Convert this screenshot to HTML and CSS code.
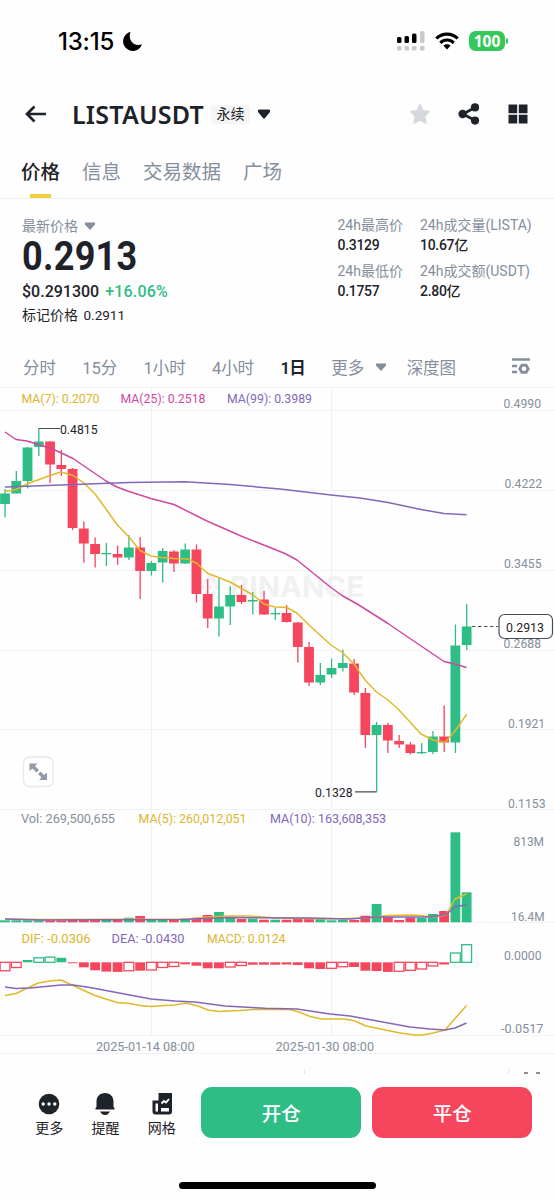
FILE: index.html
```html
<!DOCTYPE html>
<html lang="zh-CN">
<head>
    <meta charset="UTF-8">
    <meta name="viewport" content="width=device-width, initial-scale=1.0">
    <title>LISTAUSDT</title>
    <link rel="stylesheet" href="styles.css">
</head>
<body>
    <div class="status-bar">
        <span class="time">13:15</span>
        <svg class="moon" width="20" height="20" viewBox="0 0 20 20"><path d="M7.5 0.8A9.7 9.7 0 1 0 19 13.3C11 16.500 4.500 9 7.5 .8Z"/></svg>
        <svg class="signal" width="28" height="20" viewBox="0 0 28 20">
            <g fill="#c9c9cb"><rect x="23" y="0" width="4.5" height="12" rx="1.5"/><rect x="0" y="15" width="4.5" height="4.5" rx="1.3"/><rect x="7.5" y="15" width="4.5" height="4.5" rx="1.3"/><rect x="15" y="15" width="4.5" height="4.5" rx="1.3"/><rect x="23" y="15" width="4.5" height="4.5" rx="1.3"/></g>
            <rect x="0" y="6" width="4.5" height="6" rx="1.5"/><rect x="7.5" y="5" width="4.5" height="7" rx="1.5"/><rect x="15" y="2.5" width="4.5" height="9.5" rx="1.5"/>
        </svg>
        <svg class="wifi" width="24" height="18" viewBox="0 0 24 18"><g fill="none" stroke="#000" stroke-width="3.1"><path d="M1.3 6.5A15.2 15.2 0 0 1 22.7 6.5"/><path d="M5.3 10.8A9.5 9.5 0 0 1 18.7 10.8"/></g><path d="M8.4 13.8A5.2 5.2 0 0 1 15.6 13.8L12 17.6Z"/></svg>
        <span class="battery">100</span>
    </div>

    <div class="header">
        <svg class="back" width="22" height="18" viewBox="0 0 22 18"><path d="M21 9H2.5M9.5 1.5L2 9l7.5 7.5" fill="none" stroke="#1e2329" stroke-width="2.7"/></svg>
        <h1>LISTAUSDT</h1>
        <span class="tag">永续</span>
        <svg class="caret" width="12" height="10" viewBox="0 0 12 10"><path d="M0 1.2Q0 .5 1 .5H11Q12 .5 12 1.2V3L7 9Q6 10 5 9L0 3Z" fill="#1e2329"/></svg>
        <svg class="star" width="22" height="22" viewBox="0 0 22 22"><path d="M11 1l3 6.6 7 .8-5.1 5 1.3 7.1L11 17.2l-6.2 3.3 1.3-7.1L1 8.4l7-.8z" fill="#d5d9df" stroke="#d5d9df" stroke-width="1" stroke-linejoin="round"/></svg>
        <svg class="share" width="22" height="22" viewBox="0 0 22 22" fill="#1e2329"><path d="M17 4.5L5 11l12 6.5" fill="none" stroke="#1e2329" stroke-width="2.6"/><circle cx="4.6" cy="11" r="4.2"/><circle cx="17" cy="4.4" r="4.1"/><circle cx="17" cy="17.6" r="4.1"/></svg>
        <svg class="grid" width="20" height="20" viewBox="0 0 20 20" fill="#1e2329"><path d="M.5.5h8.7v8.7H.5zM10.8.5h8.7v8.7h-8.7zM.5 10.8h8.7v8.7H.5zM10.8 10.8h8.7v8.7h-8.7z"/></svg>
    </div>

    <div class="tabs">
        <span class="active">价格</span>
        <span>信息</span>
        <span>交易数据</span>
        <span>广场</span>
    </div>

    <div class="summary">
        <div class="price">
            <div class="label">最新价格 <svg width="10" height="8" viewBox="0 0 10 8"><path d="M0 .5H10V2.5L5 8L0 2.5Z" fill="#848e9c"/></svg></div>
            <div class="big"><span>0.2913</span></div>
            <div class="fiat"><span>$0.291300</span> <span class="up">+16.06%</span></div>
            <div class="mark">标记价格 <span>0.2911</span></div>
        </div>
        <div class="stats">
            <div class="stat"><p>24h最高价</p><b>0.3129</b></div>
            <div class="stat"><p>24h成交量(LISTA)</p><b>10.67亿</b></div>
            <div class="stat"><p>24h最低价</p><b>0.1757</b></div>
            <div class="stat"><p>24h成交额(USDT)</p><b>2.80亿</b></div>
        </div>
    </div>

    <div class="periods">
        <span>分时</span>
        <span>15分</span>
        <span>1小时</span>
        <span>4小时</span>
        <span class="active">1日</span>
        <span class="more">更多 <svg width="10" height="8" viewBox="0 0 10 8"><path d="M0 .5H10V2.5L5 8L0 2.5Z" fill="#848e9c"/></svg></span>
        <span>深度图</span>
        <svg class="settings" width="18" height="17" viewBox="0 0 18 17"><path d="M0 1.5H18M0 8H5M0 14H5" stroke="#848e9c" stroke-width="2.5"/><path d="M9.5 6.6h5l2.5 4.2-2.5 4.2h-5L7 10.8z" fill="#848e9c" stroke="#848e9c" stroke-width="1.5" stroke-linejoin="round"/><circle cx="12" cy="10.8" r="2.3" fill="#fff"/></svg>
    </div>

    <svg class="chart" width="554" height="667" viewBox="0 387 554 667">
        <g class="lines">
            <path d="M0 387.5H554M0 410.5H554M0 490.5H554M0 570.5H554M0 650.5H554M0 729.5H554M0 809.5H554M0 922.5H554M0 1035.5H554M0 1053.5H554"/>
            <path d="M151.5 388V1035M331.5 388V1035"/>
        </g>
        <g class="watermark">
            <path d="M210 574l7 7-3 3-4-4-4 4-3-3zM200 587l3-3 3 3-3 3zM207 587l3-3 3 3-3 3zM214 587l3-3 3 3-3 3zM203 593l3-3 4 4 4-4 3 3-7 7z"/>
            <text x="230" y="597" textLength="134">BINANCE</text>
        </g>

        <g id="candles"></g>
        <g id="volume"></g>
        <g id="macd"></g>

        <!-- moving averages -->
        <polyline class="line yellow" points="5,491.5 16,489.5 27,484 50,475.5 61,472 73,475.5 84,483 95,494 106,509 117,524.5 129,537 140,550.5 151,556 162,557.5 174,558.5 188,559 197,563.5 207,573 230,582 253,595 264,604 275,607 287,607.5 297.5,613.5 309,625 331,645 343,653 354,664 365,680 376.5,692 388,700 399,710 421,734 433,740 445,742.5 455,731 466.5,714.5"/>
        <polyline class="line pink" points="5,432 16,439.5 27,441 43,446 55,450 73,458.5 84,466 95,473.5 106,481 117,487 129,491.5 151,498.5 174,504.5 207,521 241,536 275,549.5 286,554 297,560 308,569 331,587.5 342,595.5 358,604.5 388,623.5 410,638.500 444,661.5 455,664 466.5,667.5"/>
        <polyline class="line purple" points="5,487 61,485 129,482.5 185,481.8 230,484.5 280,489 331,495 360,498 388,502.5 421,509.5 444,513.5 466.5,514.7"/>
        <polyline class="line yellow" points="5,919 40,919.5 190,919 207,917 230,916 250,916 275,918 330,919 365,918 388,915.5 415,915 433,917 446,915 455,899 466.5,894"/>
        <polyline class="line purple" points="5,919 40,920 180,919.5 230,917.5 310,918 350,919 376,917 430,917 446,914.5 455,907 466.5,904.5"/>
        <polyline class="line yellow" points="5,995.5 16,993.5 38,983 50,981 61,980 73,985.5 95,995.5 117,1002.5 130,1003.5 140,1005.5 151,1006.5 165,1005.5 175,1005 186,1003 198,1006 208,1010 219,1011.5 240,1010.5 253,1009.5 290,1009.5 299,1012 310,1016.5 322,1019 345,1019 355,1021 366,1026 400,1033 415,1035 423,1035 433,1033 445,1030 466.5,1005.5"/>
        <polyline class="line purple" points="5,987 16,988.5 30,988 61,985 73,985 90,987.5 151,999 175,1001 195,1002 225,1006 265,1008.3 297,1009 330,1014 350,1016 410,1027 430,1029 445,1030 455,1028 466.5,1023"/>

        <!-- indicator values -->
        <g class="legend">
            <text class="t-yellow" x="21.5" y="403" textLength="78">MA(7): 0.2070</text>
            <text class="t-pink" x="120.5" y="403" textLength="85">MA(25): 0.2518</text>
            <text class="t-purple" x="227" y="403" textLength="85">MA(99): 0.3989</text>
            <text class="t-gray" x="21" y="823" textLength="94">Vol: 269,500,655</text>
            <text class="t-yellow" x="138.5" y="823" textLength="108">MA(5): 260,012,051</text>
            <text class="t-purple" x="270" y="823" textLength="116">MA(10): 163,608,353</text>
            <text class="t-yellow" x="21.5" y="942.5" textLength="69">DIF: -0.0306</text>
            <text class="t-purple" x="111.5" y="942.5" textLength="73">DEA: -0.0430</text>
            <text class="t-yellow" x="207" y="942.5" textLength="78.5">MACD: 0.0124</text>
        </g>

        <g class="axis">
            <text x="503.5" y="408" textLength="37.5">0.4990</text>
            <text x="504.5" y="488" textLength="37.5">0.4222</text>
            <text x="504" y="568" textLength="37.5">0.3455</text>
            <text x="503.5" y="648" textLength="37.5">0.2688</text>
            <text x="508" y="727.500" textLength="37">0.1921</text>
            <text x="508" y="807.500" textLength="37.5">0.1153</text>
            <text x="513.5" y="845.500" textLength="30.5">813M</text>
            <text x="511" y="920.500" textLength="33.5">16.4M</text>
            <text x="504" y="960" textLength="37.5">0.0000</text>
            <text x="501" y="1032.500" textLength="42.5">-0.0517</text>
            <text x="96" y="1051" textLength="98.5">2025-01-14 08:00</text>
            <text x="275.5" y="1051" textLength="98.5">2025-01-30 08:00</text>
        </g>

        <!-- high / low / last price marks -->
        <g class="marks">
            <path d="M38.7 428.5H60M355 791.8H376.7"/>
            <path d="M472 626.5H498" stroke-dasharray="3.5 2.5"/>
            <rect x="499" y="614.5" width="53.5" height="24" rx="5.5"/>
            <text x="60" y="434" textLength="37.5">0.4815</text>
            <text x="315" y="797" textLength="37.5">0.1328</text>
            <text x="506" y="632" textLength="38">0.2913</text>
        </g>

        <g class="expand">
            <rect x="23.5" y="757" width="29.5" height="29.5" rx="6"/>
            <path d="M29.5 763.5H37.5L35 766l4 4-2.5 2.5-4-4-3 2.5zM47 780H39l2.5-2.5-3.5-3.5 2.5-2.5 3.5 3.5 3-2.5z"/>
        </g>
    </svg>

    <div class="peek"><i></i><i></i><span></span><span></span></div>

    <div class="actions">
        <div class="action">
            <svg width="22" height="22" viewBox="0 0 22 22"><circle cx="11" cy="11" r="10.3" fill="#1e2329"/><g fill="#fff"><circle cx="5.2" cy="11" r="1.7"/><circle cx="11" cy="11" r="1.7"/><circle cx="16.8" cy="11" r="1.7"/></g></svg>
            <span>更多</span>
        </div>
        <div class="action">
            <svg width="22" height="22" viewBox="0 0 22 22" fill="#1e2329"><path d="M2.5 14V8.5C2.5 3.5 6 0 11 0s8.5 3.5 8.500 8.5V14l1 1v1.5h-19V15zM6 18.5h10Q14 22 11 22T6 18.5z"/></svg>
            <span>提醒</span>
        </div>
        <div class="action">
            <svg width="22" height="22" viewBox="0 0 22 22"><path d="M7.5 0H21V18.5Q21 21.5 18 21.5H4.5Q1.5 21.5 1.5 18.5V7.5H7.5Z" fill="#1e2329"/><path d="M4.5 10.5H7v8H4.5zM10 15h8v3.500h-8z" fill="#fff"/><path d="M10.5 10.5l2.5-2.500 2 1.500 3-3.500" fill="none" stroke="#fff" stroke-width="1.9"/></svg>
            <span>网格</span>
        </div>
        <button class="open">开仓</button>
        <button class="close">平仓</button>
    </div>

    <div class="home-bar"></div>

    <script src="chart.js"></script>
</body>
</html>
```
FILE: styles.css
```css
* {
    box-sizing: border-box;
}

body {
    width: 554px;
    height: 1200px;
    margin: 0;
    overflow: hidden;
    background: #fefefe;
    color: #1e2329;
    font-family: Roboto, "Noto Sans CJK SC", sans-serif;
}

svg {
    display: block;
    flex-shrink: 0;
}

h1, p {
    margin: 0;
}

.status-bar {
    display: flex;
    align-items: center;
    height: 82px;
    padding-left: 58px;
}

.time {
    width: 60px;
    font: 500 24px Inter, sans-serif;
    letter-spacing: -0.2px;
    color: #000;
    white-space: nowrap;
}

.moon {
    margin-left: 5px;
}

.signal {
    margin: 0 10px 0 254px;
}

.battery {
    position: relative;
    width: 36px;
    height: 20px;
    margin-left: 10px;
    border-radius: 6.5px;
    background: #35c759;
    color: #fff;
    font: 700 15.5px/20px "Open Sans", sans-serif;
    text-align: center;
}

.battery::after {
    content: "";
    position: absolute;
    right: -3px;
    top: 7px;
    width: 2px;
    height: 6px;
    border-radius: 0 2px 2px 0;
    background: #35c759;
}

.header {
    display: flex;
    align-items: center;
    height: 64px;
    padding-left: 25px;
}

.header h1 {
    width: 132px;
    margin-left: 25px;
    font: 600 25px/32px "Noto Sans", sans-serif;
    letter-spacing: 0.2px;
    white-space: nowrap;
}

.tag {
    width: 39px;
    margin-left: 7px;
    border-radius: 3px;
    background: #f5f5f5;
    font-size: 14px;
    line-height: 19px;
    text-align: center;
}

.caret {
    margin-left: 8px;
}

.star {
    margin-left: 139px;
}

.share {
    margin-left: 27px;
}

.grid {
    margin-left: 28px;
}

.tabs {
    display: flex;
    gap: 22px;
    height: 53px;
    padding-left: 21px;
    border-bottom: 1px solid #f0f1f2;
    color: #848e9c;
    font-size: 19.5px;
    line-height: 54px;
}

.tabs span {
    height: 52px;
}

.tabs .active {
    position: relative;
    color: #1e2329;
    font-weight: 500;
}

.tabs .active::after {
    content: "";
    position: absolute;
    left: 9px;
    bottom: 0;
    width: 21px;
    height: 4px;
    background: #f0d03c;
}

.summary {
    display: flex;
    height: 147px;
    padding: 16px 0 0 22px;
}

.price {
    width: 315.5px;
}

.label {
    display: flex;
    align-items: center;
    gap: 7px;
    height: 22px;
    color: #848e9c;
    font-size: 14px;
    line-height: 18px;
}

.big {
    height: 38px;
    font-size: 41px;
    font-weight: 700;
    line-height: 38px;
}

.big span {
    display: inline-block;
    transform: scaleX(0.88);
    transform-origin: left;
    letter-spacing: 0.3px;
}

.fiat {
    display: flex;
    gap: 6px;
    height: 33px;
    font-size: 16px;
    font-weight: 500;
    line-height: 34px;
}

.fiat .up {
    color: #2ebd85;
    letter-spacing: 0.2px;
}

.mark {
    font-size: 14px;
    line-height: 14px;
}

.mark span {
    margin-left: 2px;
    font-size: 13.5px;
}

.stats {
    display: grid;
    grid-template-columns: 82.5px 130px;
    grid-auto-rows: 46px;
}

.stat p {
    color: #848e9c;
    font-size: 14px;
    line-height: 20px;
    white-space: nowrap;
}

.stat b {
    display: block;
    font-size: 14px;
    font-weight: 500;
    letter-spacing: -0.3px;
    line-height: 20px;
}

.periods {
    display: flex;
    align-items: center;
    gap: 26.5px;
    height: 41px;
    padding-left: 23px;
    color: #848e9c;
    font-size: 16.5px;
    letter-spacing: -0.1px;
    white-space: nowrap;
}

.periods .active {
    color: #1e2329;
    font-weight: 600;
    letter-spacing: -0.8px;
}

.more {
    display: flex;
    align-items: center;
    gap: 12px;
}

.periods span:nth-child(7) {
    margin-left: -6px;
}

.settings {
    margin: 0 24px 0 auto;
}

.lines path {
    fill: none;
    stroke: #f1f2f3;
}

.watermark {
    fill: #f1f1f2;
    font: 700 28px Inter, sans-serif;
}

.up {
    fill: #2ebd85;
}

.down {
    fill: #f6465d;
}

.hollow {
    fill: #fff;
    stroke-width: 1.3;
}

.hollow.up {
    stroke: #2ebd85;
}

.hollow.down {
    stroke: #f6465d;
}

.line {
    fill: none;
    stroke-width: 1.5;
    stroke-linejoin: round;
}

.yellow {
    stroke: #e2b92b;
}

.pink {
    stroke: #ce4aa2;
}

.purple {
    stroke: #8367b8;
}

.legend, .axis, .marks {
    font-size: 13px;
}

.axis, .t-gray {
    fill: #848e9c;
}

.marks text {
    fill: #1e2329;
}

.t-yellow {
    fill: #dcb62e;
}

.t-pink {
    fill: #ce4aa2;
}

.t-purple {
    fill: #8367b8;
}

.marks path {
    fill: none;
    stroke: #474d57;
    stroke-width: 1.2;
}

.marks rect {
    fill: #fff;
    stroke: #474d57;
    stroke-width: 1.2;
}

.expand rect {
    fill: #fff;
    stroke: #e6e8ea;
    stroke-width: 1.3;
}

.expand path {
    fill: #929aa5;
}

.peek {
    display: flex;
    align-items: flex-end;
    height: 20px;
    padding-left: 304px;
}

.peek i {
    width: 1px;
    height: 5px;
    margin-right: 203px;
    background: #e3e5e7;
}

.peek i + i {
    margin-right: 15px;
}

.peek span {
    width: 4px;
    height: 2px;
    margin-right: 8px;
    background: #8a9097;
}

.actions {
    display: flex;
    height: 64px;
    padding: 13px 0 0 21px;
}

.action {
    display: flex;
    flex-direction: column;
    align-items: center;
    gap: 2.5px;
    width: 56.3px;
    padding-top: 6px;
    font-size: 14px;
    line-height: 20px;
}

.actions button {
    width: 160.5px;
    height: 51px;
    margin-left: 11px;
    padding: 0;
    border: none;
    border-radius: 11px;
    background: #2ebd85;
    color: #fff;
    font-family: inherit;
    font-size: 19.5px;
    font-weight: 500;
}

.actions .close {
    width: 159.5px;
    background: #f6465d;
}

.home-bar {
    width: 197px;
    height: 7px;
    margin: 44px 0 0 179px;
    border-radius: 4px;
    background: #000;
}
```
FILE: chart.js
```javascript
const STEP = 11.26;
const START = 5;
const VOL_BASE = 922.3;
const MACD_BASE = 962.3;

// direction, high, body top, body bottom, low, volume top
const candles = [
    ["up", 489, 493.5, 504, 517.5, 920.3],
    ["up", 471, 481, 493.5, 493.5, 920.3],
    ["up", 447, 447.5, 481, 488.5, 920.3],
    ["up", 428.5, 441.5, 447, 456, 920.3],
    ["down", 441, 441.5, 464.5, 483, 920.3],
    ["down", 450, 465, 469, 476, 920.3],
    ["down", 468, 469, 528, 530, 920],
    ["down", 521.5, 528.5, 543.5, 562.5, 920],
    ["down", 537.5, 544, 554, 567.5, 920],
    ["up", 543, 553, 554.3, 566, 920],
    ["down", 545.5, 554, 557.5, 565, 920],
    ["up", 535, 547.5, 557.5, 560, 917.7],
    ["down", 537, 547.5, 571, 599, 916],
    ["up", 561, 563, 571, 575.5, 919.5],
    ["up", 548, 551, 562.5, 582.5, 919.5],
    ["down", 550, 551.5, 563.5, 572, 919.5],
    ["up", 543.5, 549.5, 563.5, 564, 919.5],
    ["down", 544.5, 549.5, 594, 602.5, 917.7],
    ["down", 579, 594, 618.5, 628, 915],
    ["up", 577, 606.5, 618.5, 636.5, 912],
    ["up", 586, 595, 606.5, 625, 918],
    ["down", 585, 595, 602, 604, 919],
    ["up", 592, 600, 601.5, 614.5, 918.7],
    ["down", 591, 599.5, 614.5, 615, 919.7],
    ["up", 608, 613, 614.3, 620, 919.7],
    ["down", 605, 613, 622, 622.5, 919.7],
    ["down", 622, 622.5, 647, 662.5, 918.7],
    ["down", 642, 647, 682.5, 686, 918.7],
    ["up", 663, 675, 682.5, 685, 918.5],
    ["up", 658.5, 668, 674.5, 678, 920.3],
    ["up", 649.5, 663, 668, 671.5, 919.7],
    ["down", 659, 663.5, 692.5, 695, 920],
    ["down", 688, 693, 735, 748, 915.7],
    ["up", 722, 725, 735, 791.5, 904],
    ["down", 723, 725, 740.5, 753, 917],
    ["down", 735, 741, 744.5, 748, 920],
    ["down", 742, 744.5, 753, 754.5, 917.5],
    ["up", 743, 752, 753.3, 754, 918],
    ["up", 731, 736.5, 752, 754, 914],
    ["down", 705.5, 736.5, 742.5, 752, 911],
    ["up", 624.5, 645.5, 742.5, 753, 832.3],
    ["up", 604, 626.5, 645, 650, 892.3]
];

// bar length (positive is up), hollow or not
const macd = [
    [-8.5, 1], [-5.2, 1], [2.3, 0], [4.5, 1], [5.2, 1], [4.5, 0], [-1, 0],
    [-5, 0], [-8, 0], [-9.3, 0], [-9.6, 0], [-8.5, 1], [-8.4, 0], [-7.7, 1],
    [-5.2, 1], [-4.2, 1], [-2, 0], [-3.4, 0], [-6, 0], [-6, 0], [-4.7, 1],
    [-3.2, 1], [-2.4, 0], [-2.4, 0], [-2.4, 0], [-2.2, 0], [-2.7, 0],
    [-6, 0], [-6.7, 0], [-6, 1], [-4.4, 1], [-4.7, 0], [-8.4, 0], [-8.7, 0],
    [-9.6, 0], [-9, 1], [-8, 1], [-6.7, 1], [-3.7, 1], [-2.2, 0], [9.3, 1], [17.6, 1]
];

function rect(parent, cls, x, y, width, height) {
    const el = document.createElementNS("http://www.w3.org/2000/svg", "rect");
    el.setAttribute("class", cls);
    el.setAttribute("x", x);
    el.setAttribute("y", y);
    el.setAttribute("width", width);
    el.setAttribute("height", height);
    parent.appendChild(el);
}

const candleGroup = document.getElementById("candles");
const volumeGroup = document.getElementById("volume");
const macdGroup = document.getElementById("macd");

candles.forEach(([dir, high, top, bottom, low, vol], i) => {
    const x = START + i * STEP;
    rect(candleGroup, dir, x - 0.6, high, 1.3, low - high);
    rect(candleGroup, dir, x - 4.9, top, 9.8, bottom - top);
    rect(volumeGroup, dir, x - 4.9, vol, 9.8, VOL_BASE - vol);
});

macd.forEach(([size, hollow], i) => {
    const x = START + i * STEP;
    const dir = size > 0 ? "up" : "down";
    const y = size > 0 ? MACD_BASE - size : MACD_BASE;
    if (hollow) {
        rect(macdGroup, "hollow " + dir, x - 4.9, y, 9.8, Math.abs(size));
    } else {
        rect(macdGroup, dir, x - 4.9, y, 9.8, Math.abs(size));
    }
});

// squeeze the glyphs too, not only the gaps
document.querySelectorAll(".chart text").forEach(t => {
    t.setAttribute("lengthAdjust", "spacingAndGlyphs");
});
```
